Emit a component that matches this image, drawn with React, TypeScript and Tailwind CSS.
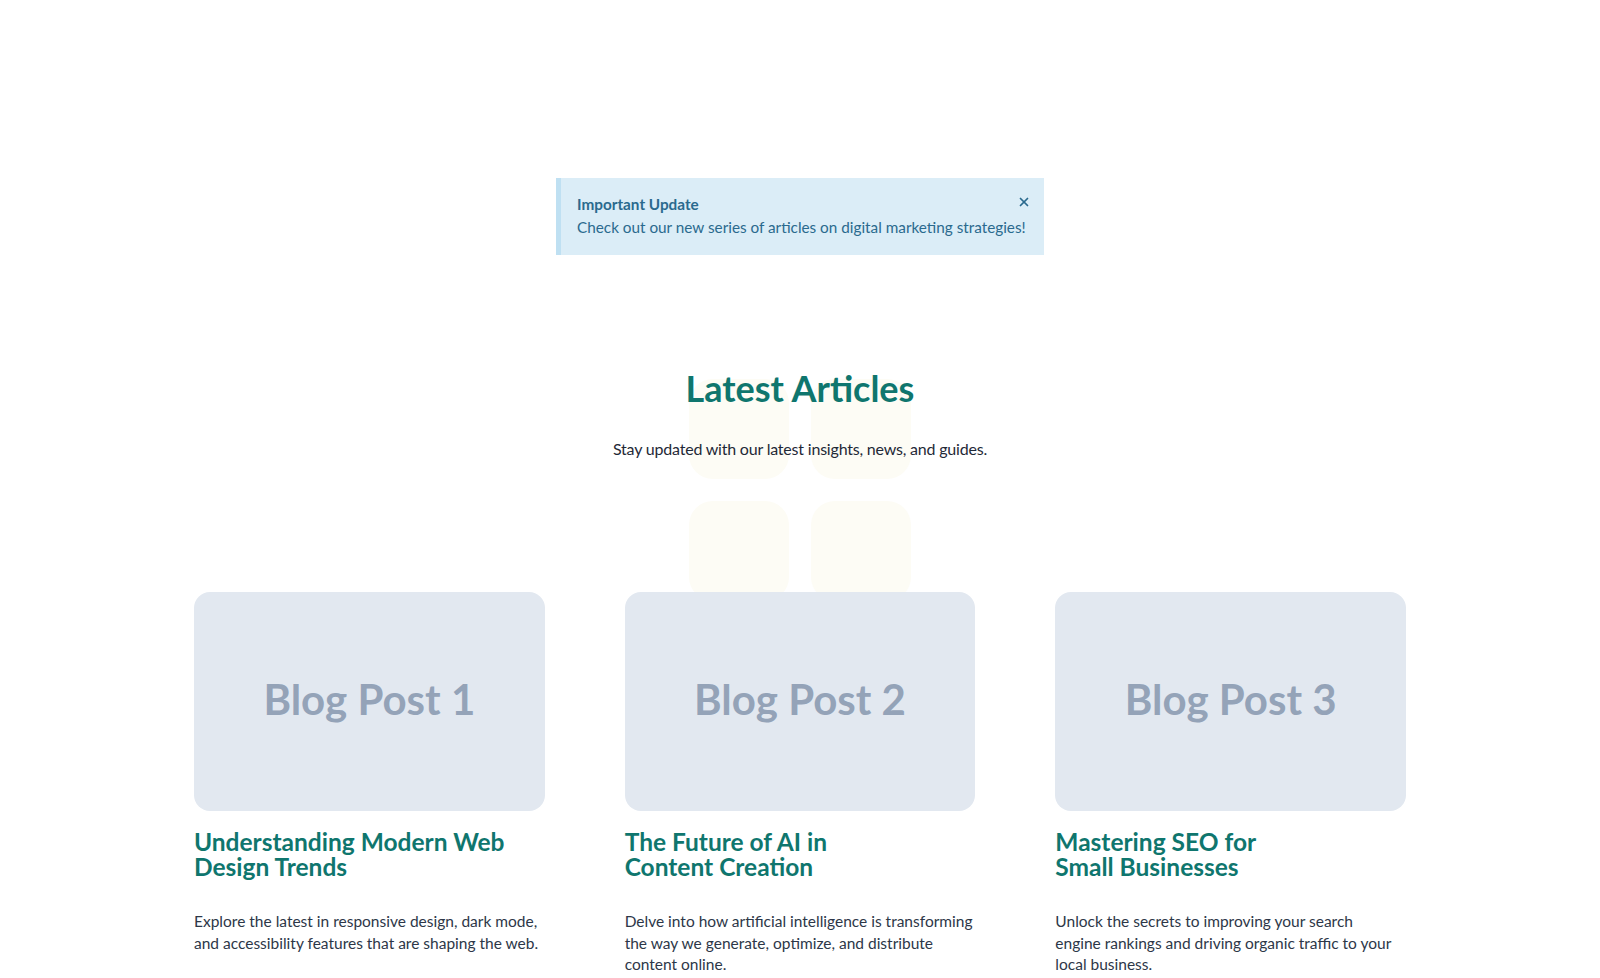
import { X } from "lucide-react";

type Post = {
  id: number;
  title: [string, string];
  excerpt: string[];
};

const posts: Post[] = [
  {
    id: 1,
    title: ["Understanding Modern Web", "Design Trends"],
    excerpt: [
      "Explore the latest in responsive design, dark mode,",
      "and accessibility features that are shaping the web.",
    ],
  },
  {
    id: 2,
    title: ["The Future of AI in", "Content Creation"],
    excerpt: [
      "Delve into how artificial intelligence is transforming",
      "the way we generate, optimize, and distribute",
      "content online.",
    ],
  },
  {
    id: 3,
    title: ["Mastering SEO for", "Small Businesses"],
    excerpt: [
      "Unlock the secrets to improving your search",
      "engine rankings and driving organic traffic to your",
      "local business.",
    ],
  },
];

function Notice() {
  return (
    <div className="relative w-[488px] border-l-[5px] border-[#bfe0f2] bg-[#dbedf7] px-4 pt-[15px] pb-[16px] text-[#2a6a8e]">
      <p className="text-[15.3px] font-bold leading-[23px]">Important Update</p>
      <p className="text-[15.3px] leading-[23px]">
        Check out our new series of articles on digital marketing strategies!
      </p>
      <button className="absolute right-[13px] top-[17px] text-[#2a6a8e]">
        <X size={14} strokeWidth={3} />
      </button>
    </div>
  );
}

function PostCard({ post }: { post: Post }) {
  return (
    <article className="relative z-10 flex flex-col">
      <div className="flex h-[219px] items-center justify-center rounded-2xl bg-[#e2e8f0]">
        <span className="-mt-1 text-[42px] font-bold text-[#94a3b8]">Blog Post {post.id}</span>
      </div>
      <h3 className="mt-[19px] text-[24.5px] font-bold leading-[24.5px] text-[#0f766e]">
        {post.title[0]}
        <br />
        {post.title[1]}
      </h3>
      <p className="mt-[32px] text-[15.5px] leading-[21.5px] text-[#2d3748]">
        {post.excerpt.map((line, i) => (
          <span key={i} className="block">
            {line}
          </span>
        ))}
      </p>
    </article>
  );
}

export default function App() {
  return (
    <div className="min-h-screen bg-white font-['Lato',sans-serif]">
      <div className="flex justify-center pt-[178px]">
        <Notice />
      </div>

      <section className="relative mx-auto max-w-[1276px] px-8 pt-[113px] pb-10">
        {/* soft tiles behind the section heading */}
        <div className="pointer-events-none absolute left-1/2 top-[124px] grid -translate-x-1/2 grid-cols-2 gap-[22px]">
          <div className="h-[100px] w-[100px] rounded-3xl bg-[#fdfcf5]" />
          <div className="h-[100px] w-[100px] rounded-3xl bg-[#fdfcf5]" />
          <div className="h-[100px] w-[100px] rounded-3xl bg-[#fdfcf5]" />
          <div className="h-[100px] w-[100px] rounded-3xl bg-[#fdfcf5]" />
        </div>

        <div className="relative text-center">
          <h2 className="text-[36px] font-bold leading-10 text-[#0f766e]">Latest Articles</h2>
          <p className="mt-[27px] text-[16px] leading-7 tracking-[-0.2px] text-[#1f2937]">
            Stay updated with our latest insights, news, and guides.
          </p>
        </div>

        <div className="mt-[129px] grid grid-cols-3 gap-20">
          {posts.map((post) => (
            <PostCard key={post.id} post={post} />
          ))}
        </div>
      </section>
    </div>
  );
}
